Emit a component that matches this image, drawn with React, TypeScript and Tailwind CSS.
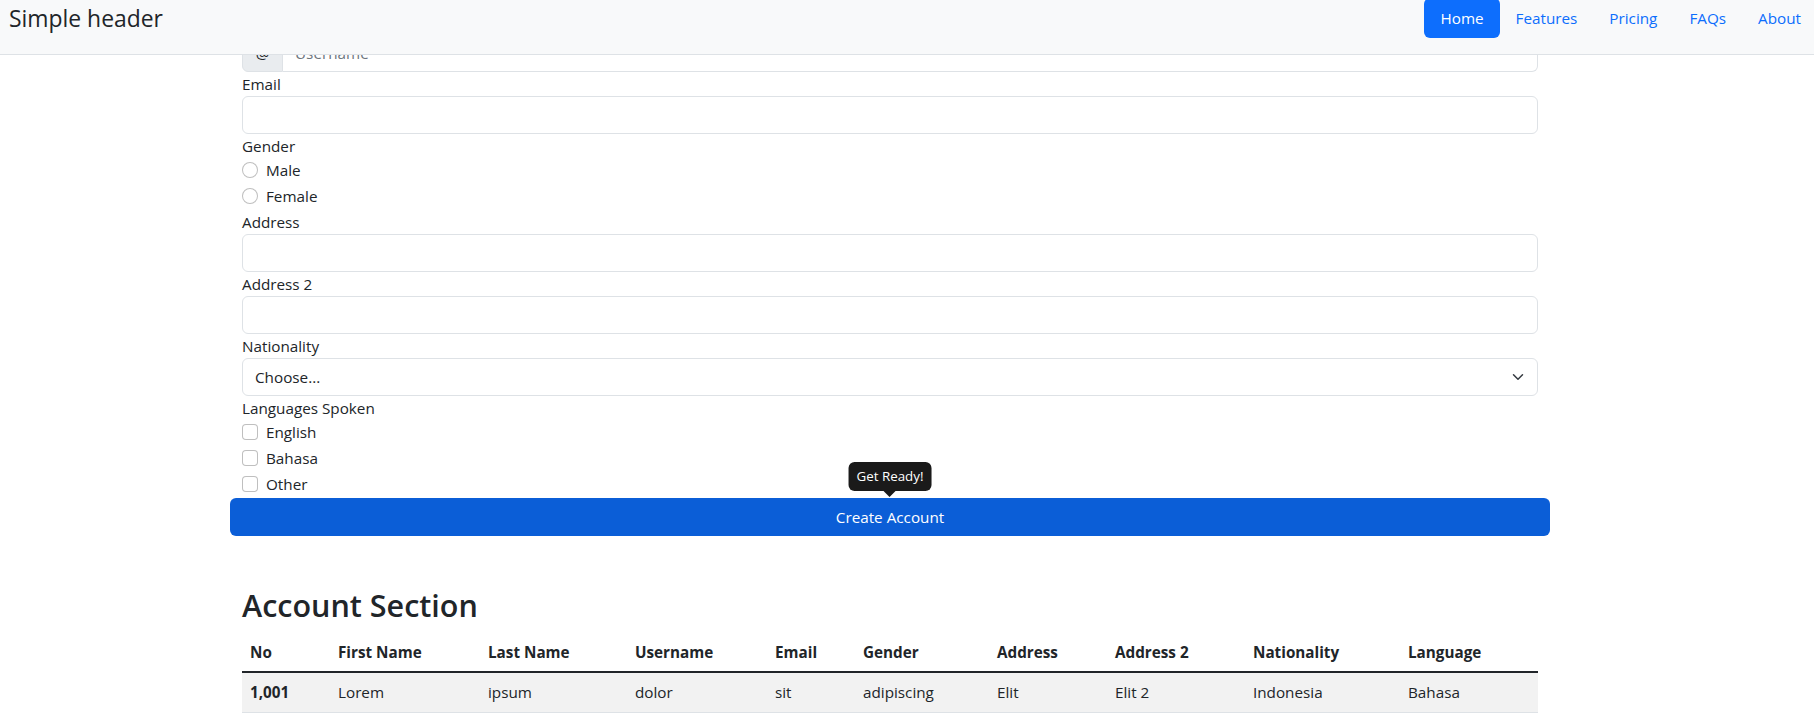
import React from 'react';

const navItems = ['Home', 'Features', 'Pricing', 'FAQs', 'About'];

// column widths picked from the reference table
const columns = [
  { label: 'No', cls: 'w-[88px]' },
  { label: 'First Name', cls: 'w-[150px]' },
  { label: 'Last Name', cls: 'w-[147px]' },
  { label: 'Username', cls: 'w-[140px]' },
  { label: 'Email', cls: 'w-[88px]' },
  { label: 'Gender', cls: 'w-[134px]' },
  { label: 'Address', cls: 'w-[118px]' },
  { label: 'Address 2', cls: 'w-[138px]' },
  { label: 'Nationality', cls: 'w-[155px]' },
  { label: 'Language', cls: 'w-auto' },
];

const row = ['Lorem', 'ipsum', 'dolor', 'sit', 'adipiscing', 'Elit', 'Elit 2', 'Indonesia', 'Bahasa'];

const inputCls =
  'block h-[38px] w-full rounded-md border border-[#dee2e6] bg-white px-3 outline-none';

const Label: React.FC<{ children: React.ReactNode }> = ({ children }) => (
  <label className="block h-6 leading-6">{children}</label>
);

const Check: React.FC<{ label: string; type: 'radio' | 'checkbox'; name: string }> = ({ label, type, name }) => (
  <div className="mb-[2px] flex h-6 items-start">
    <input
      type={type}
      name={name}
      className={`mt-1 h-4 w-4 shrink-0 appearance-none border border-black/25 bg-white ${
        type === 'radio' ? 'rounded-full' : 'rounded-[4px]'
      }`}
    />
    <span className="ml-2 leading-6">{label}</span>
  </div>
);

export default function App() {
  return (
    <div className="min-h-screen bg-white font-['Open_Sans',sans-serif] text-[15.25px] leading-6 text-[#212529]">
      {/* header fixo */}
      <header className="fixed inset-x-0 top-0 z-10 flex h-[55px] items-start justify-between border-b border-[#dee2e6] bg-[#f8f9fa]">
        <span className="pl-[9px] pt-[4px] text-[22.9px] leading-[29px]">Simple header</span>
        <nav className="-mr-[3px] -mt-[2px] flex">
          {navItems.map((item, i) => (
            <a
              key={item}
              className={`block h-10 rounded-md px-4 leading-10 ${
                i === 0 ? 'bg-[#0d6efd] text-white' : 'text-[#0d6efd]'
              }`}
            >
              {item}
            </a>
          ))}
        </nav>
      </header>

      <main className="ml-[230px] w-[1320px] pt-[34px]">
        <div className="px-3">
          {/* username */}
          <div className="flex h-[38px]">
            <span className="flex w-[41px] items-center justify-center rounded-l-md border border-[#dee2e6] bg-[#e9ecef]">
              @
            </span>
            <input
              placeholder="Username"
              className="h-full flex-1 rounded-r-md border border-l-0 border-[#dee2e6] px-3 outline-none placeholder:text-[#6c757d]"
            />
          </div>

          <Label>Email</Label>
          <input className={inputCls} />

          <Label>Gender</Label>
          <Check type="radio" name="gender" label="Male" />
          <Check type="radio" name="gender" label="Female" />

          <Label>Address</Label>
          <input className={inputCls} />

          <Label>Address 2</Label>
          <input className={inputCls} />

          <Label>Nationality</Label>
          <div className="relative">
            <select className={`${inputCls} appearance-none`}>
              <option>Choose...</option>
            </select>
            <svg
              className="pointer-events-none absolute right-3 top-1/2 h-3 w-4 -translate-y-1/2"
              viewBox="0 0 16 16"
              fill="none"
              stroke="#343a40"
              strokeWidth="2"
              strokeLinecap="round"
              strokeLinejoin="round"
            >
              <path d="m2 5 6 6 6-6" />
            </svg>
          </div>

          <Label>Languages Spoken</Label>
          <Check type="checkbox" name="lang" label="English" />
          <Check type="checkbox" name="lang" label="Bahasa" />
          <Check type="checkbox" name="lang" label="Other" />
        </div>

        <div className="relative">
          <button className="block h-[38px] w-full rounded-md bg-[#0b5ed7] text-white">Create Account</button>
          {/* tooltip */}
          <div className="absolute bottom-[calc(100%+1px)] left-1/2 -translate-x-1/2">
            <div className="whitespace-nowrap rounded-md bg-[#1a1a1a] px-2 py-1 text-[13.35px] leading-[21px] text-white">
              Get Ready!
            </div>
            <div className="mx-auto h-0 w-0 border-x-[6px] border-t-[6px] border-x-transparent border-t-[#1a1a1a]" />
          </div>
        </div>

        <div className="px-3">
          <h2 className="mb-2 mt-[50px] text-[30.5px] font-semibold leading-[38px]">Account Section</h2>
          <table className="w-full table-fixed border-collapse text-left">
            <thead>
              <tr>
                {columns.map((c) => (
                  <th key={c.label} className={`${c.cls} border-b-2 border-[#212529] px-2 pb-[7px] pt-2 font-bold`}>
                    {c.label}
                  </th>
                ))}
              </tr>
            </thead>
            <tbody>
              <tr className="bg-[#f2f2f2]">
                <th className="border-b border-[#dee2e6] px-2 pb-2 pt-[7px] font-bold">1,001</th>
                {row.map((v, i) => (
                  <td key={i} className="border-b border-[#dee2e6] px-2 pb-2 pt-[7px]">
                    {v}
                  </td>
                ))}
              </tr>
            </tbody>
          </table>
        </div>
      </main>
    </div>
  );
}
